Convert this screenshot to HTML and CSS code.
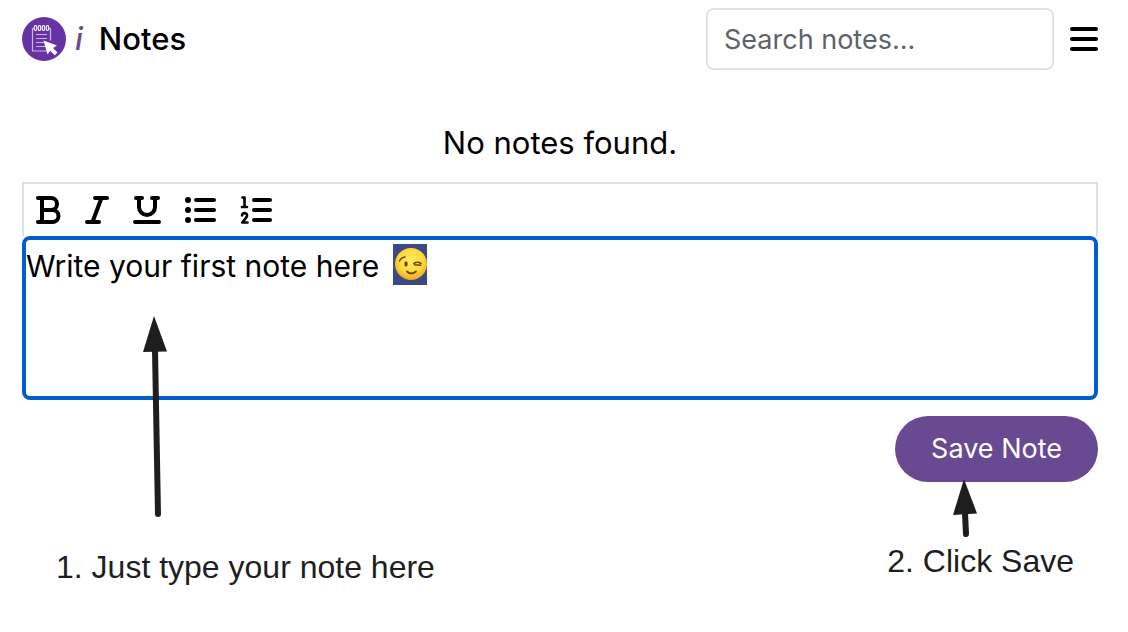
FILE: index.html
```html
<!DOCTYPE html>
<html lang="en">
<head>
<meta charset="utf-8">
<meta name="viewport" content="width=device-width, initial-scale=1">
<title>i Notes</title>
<link rel="stylesheet" href="styles.css">
</head>
<body>
<div class="app">
  <header class="header">
    <div class="brand">
      <svg class="logo" viewBox="0 0 44 44" aria-hidden="true">
        <circle cx="22" cy="22" r="22" fill="#6633a5"/>
        <g fill="none" stroke="#c9b3e4" stroke-width="1.2">
          <path d="M12 11.500h-1.500v22.500H25M27 11.500h1.500v12"/>
          <path d="M14.500 17.500h10M14.500 21.500h10M14.500 25.500h7M14.500 29.500h9" stroke-linecap="round"/>
        </g>
        <g fill="none" stroke="#fff" stroke-width="1.100">
          <ellipse cx="13.500" cy="11" rx="1.300" ry="2.500"/><ellipse cx="17.500" cy="11" rx="1.300" ry="2.500"/>
          <ellipse cx="21.500" cy="11" rx="1.300" ry="2.500"/><ellipse cx="25.500" cy="11" rx="1.300" ry="2.500"/>
        </g>
        <path d="M21.500 23.500l13.500 5-4 2.500 4.500 4.500-2.700 2.700-4.600-4.500-2.700 3.800z" fill="#fff"/>
      </svg>
      <h1 class="title"><em class="title-mark">i</em> <span>Notes</span></h1>
    </div>
    <div class="tools">
      <input class="search" type="search" placeholder="Search notes..." aria-label="Search notes">
      <button class="icon-button" type="button" aria-label="Menu">
        <svg width="28" height="24" viewBox="0 0 28 24" stroke="#000" stroke-width="4" stroke-linecap="round"><path d="M2 2h24M2 12h24M2 22h24"/></svg>
      </button>
    </div>
  </header>
  <main>
    <p class="empty">No notes found.</p>
    <div class="toolbar" role="toolbar" aria-label="Formatting">
      <button class="icon-button" type="button" aria-label="Bold">
        <svg width="25" height="28" viewBox="0 0 25 28" fill="none" stroke="#000" stroke-width="4" stroke-linecap="round" stroke-linejoin="round"><path d="M2 2h13a6 6 0 0 1 0 12H6h10.500a6 6 0 0 1 0 12H2M6 2v24"/></svg>
      </button>
      <button class="icon-button" type="button" aria-label="Italic">
        <svg width="24" height="28" viewBox="0 0 24 28" fill="none" stroke="#000" stroke-width="4" stroke-linecap="round" stroke-linejoin="round"><path d="M10 2h12M2 26h12M16.500 2l-9 24"/></svg>
      </button>
      <button class="icon-button" type="button" aria-label="Underline">
        <svg width="28" height="28" viewBox="0 0 28 28" fill="none" stroke="#000" stroke-width="4" stroke-linecap="round" stroke-linejoin="round"><path d="M3 2h6M19 2h6M6 2v9a8 8 0 0 0 16 0V2M2 26h24"/></svg>
      </button>
      <button class="icon-button" type="button" aria-label="Bulleted list">
        <svg width="31" height="28" viewBox="0 0 31 28" stroke="#000" stroke-width="4" stroke-linecap="round"><path d="M11 4h18M11 14h18M11 24h18"/><g stroke="none"><circle cx="3" cy="4" r="3"/><circle cx="3" cy="14" r="3"/><circle cx="3" cy="24" r="3"/></g></svg>
      </button>
      <button class="icon-button" type="button" aria-label="Numbered list">
        <svg width="32" height="28" viewBox="0 0 32 28" fill="none" stroke="#000" stroke-linecap="round" stroke-linejoin="round"><path stroke-width="4" d="M14 4h16M14 14h16M14 24h16"/><path stroke-width="2.600" d="M2.500 1.500h2V11M2 11h5M2 19.500C2.500 16 7.500 16.500 7 20c-.300 1.800-3 3.800-4.800 6.500H7.500"/></svg>
      </button>
    </div>
    <div class="editor" contenteditable="true" role="textbox" aria-multiline="true" aria-label="Note">Write your first note here <span class="selected"><svg width="34" height="34" viewBox="0 0 34 34" role="img" aria-label="Winking face">
      <defs><radialGradient id="face" cx=".5" cy=".4" r=".6"><stop offset="0" stop-color="#ffef63"/><stop offset=".65" stop-color="#ffd83c"/><stop offset="1" stop-color="#f1a51c"/></radialGradient></defs>
      <circle cx="18" cy="17" r="16" fill="url(#face)"/>
      <g fill="none" stroke="#70410a" stroke-linecap="round"><path stroke-width="1.500" d="M6.500 14Q8 10.500 12 10"/><path stroke-width="1.600" d="M21 16.500Q24.500 14 28 16.500M21.500 17.800l6 .5"/><path stroke-width="1.800" d="M14 24.500Q18 28.500 23 24.500"/></g>
      <ellipse cx="13" cy="17" rx="1.700" ry="2.700" fill="#70410a"/>
    </svg></span></div>
    <div class="actions"><button class="save" type="button">Save Note</button></div>
  </main>
  <div class="steps">
    <p class="step step-type">1. Just type your note here
      <svg class="arrow arrow-long" width="26" height="202" viewBox="0 0 26 202" aria-hidden="true"><path d="M12 34L15 198" stroke="#1e1e1e" stroke-width="6" stroke-linecap="round"/><path d="M11 0L24 35.500 0 36z" fill="#1e1e1e"/></svg>
    </p>
    <p class="step step-save">2. Click Save
      <svg class="arrow arrow-short" width="26" height="60" viewBox="0 0 26 60" aria-hidden="true"><path d="M12 34L13 55" stroke="#1e1e1e" stroke-width="6" stroke-linecap="round"/><path d="M11 0L24 34.500 0 36z" fill="#1e1e1e"/></svg>
    </p>
  </div>
</div>
</body>
</html>
```
FILE: styles.css
```css
* { box-sizing: border-box; }
body {
  margin: 0;
  background: #fff;
  color: #000;
  font-family: Inter, "Liberation Sans", sans-serif;
  font-size: 31px;
  line-height: 40px;
}
.app { padding: 8px 30px 0 22px; }
.header, .brand, .tools, .toolbar { display: flex; align-items: center; }
.header { justify-content: space-between; }
.brand { gap: 9px; }
.logo { width: 44px; height: 44px; }
.title { display: flex; gap: 16px; margin: 0; font-size: 31px; font-weight: 500; }
.title-mark { color: #694a94; }
.tools { gap: 16px; }
.search {
  width: 348px;
  height: 62px;
  padding: 0 16px;
  border: 2px solid #dee2e6;
  border-radius: 8px;
  background: #fff;
  color: #000;
  font: inherit;
  font-size: 27px;
  appearance: none;
}
.search::placeholder { color: #5d6268; opacity: 1; }
.icon-button { display: flex; padding: 0; border: 0; background: none; cursor: pointer; }
.empty { margin: 53px 0 19px; text-align: center; }
.toolbar { height: 54px; padding: 0 12px; gap: 24px; border: 2px solid #dee2e6; border-bottom: 0; }
.editor {
  min-height: 164px;
  padding: 4px 0;
  border: 4px solid #005fcc;
  border-radius: 8px;
  outline: 0;
  font-size: 30px;
  line-height: 44px;
}
.selected {
  display: inline-flex;
  align-items: center;
  height: 41px;
  margin-left: 5px;
  padding-bottom: 2px;
  vertical-align: top;
  background: #3b4985;
}
.actions { display: flex; justify-content: flex-end; margin-top: 16px; }
.save {
  height: 66px;
  padding: 0 36px;
  border: 0;
  border-radius: 33px;
  background: #694a92;
  color: #fff;
  font: inherit;
  font-size: 27px;
  cursor: pointer;
}
.steps {
  display: flex;
  justify-content: space-between;
  padding: 59px 24px 0 34px;
  color: #1e1e1e;
  font-family: "Liberation Sans", Arial, sans-serif;
  font-size: 32px;
}
.step { position: relative; margin: 0; }
.step-type { padding-top: 6px; }
.arrow { position: absolute; }
.arrow-long { left: 87px; bottom: 69px; }
.arrow-short { left: 66px; bottom: 48px; }
```
